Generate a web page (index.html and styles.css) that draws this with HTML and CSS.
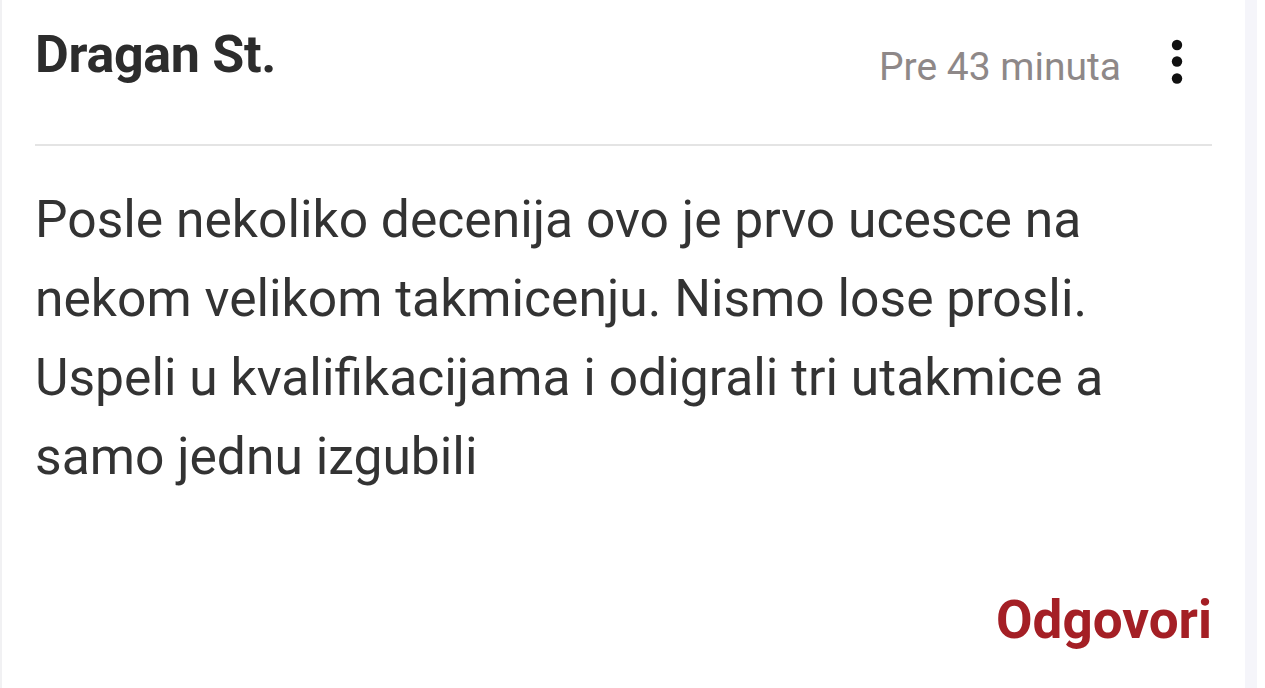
FILE: index.html
```html
<!DOCTYPE html>
<html lang="sr">
<head>
<meta charset="utf-8">
<link rel="stylesheet" href="styles.css">
</head>
<body>
<div class="page">
  <article class="comment">
    <header class="comment-head">
      <div class="author">Dragan St.</div>
      <div class="meta">
        <span class="time">Pre 43 minuta</span>
        <svg class="more" width="12" height="46" viewBox="0 0 12 46" aria-hidden="true">
          <circle cx="6" cy="6" r="5.2" fill="#111"/>
          <circle cx="6" cy="22.5" r="5.2" fill="#111"/>
          <circle cx="6" cy="39.5" r="5.2" fill="#111"/>
        </svg>
      </div>
    </header>
    <p class="comment-body">Posle nekoliko decenija ovo je prvo ucesce na nekom velikom takmicenju. Nismo lose prosli. Uspeli u kvalifikacijama i odigrali tri utakmice a samo jednu izgubili</p>
    <div class="actions"><a class="reply">Odgovori</a></div>
  </article>
  <div class="side"></div>
</div>
</body>
</html>
```
FILE: styles.css
```css
html,body{margin:0;padding:0;background:#fff}
body{font-family:Roboto,"Noto Sans",sans-serif}
.page{display:flex;height:688px;overflow:hidden}
.comment{flex:0 0 1245px;background:#fff;border-left:2px solid #f1f1f3;padding:0 33px 0 33px;box-sizing:border-box}
.side{flex:0 0 12px;background:#f5f5fa}
.comment-head{display:flex;justify-content:space-between;align-items:flex-start;height:146px;border-bottom:2.5px solid #e4e4e4;padding-top:27px;box-sizing:border-box}
.author{font-size:52px;line-height:56px;font-weight:700;color:#2c2c2c;letter-spacing:-0.3px}
.meta{display:flex;align-items:flex-start;margin-top:12px}
.time{font-size:39px;line-height:56px;color:#8e8888}
.more{display:block;margin:0 29px 0 50px}
.comment-body{margin:34px 0 0;font-size:51.6px;line-height:79px;color:#333}
.actions{display:flex;justify-content:flex-end;margin-top:101px}
.reply{font-size:53px;line-height:46px;font-weight:700;color:#a41f25;text-decoration:none}
```
